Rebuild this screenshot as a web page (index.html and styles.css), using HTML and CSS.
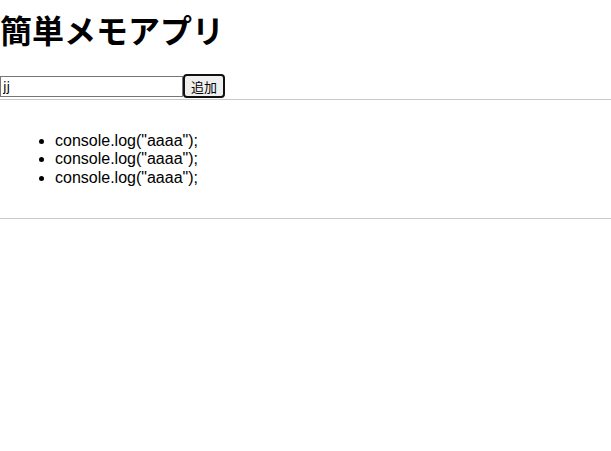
FILE: index.html
```html
<!DOCTYPE html>
<html lang="ja">
<head>
<meta charset="utf-8">
<title>簡単メモアプリ</title>
<link rel="stylesheet" href="styles.css">
</head>
<body>
<h1 class="title">簡単メモアプリ</h1>
<div class="form">
  <input class="memo-input" type="text" value="jj"><button class="add-btn">追加</button>
</div>
<hr class="rule">
<ul class="memo-list">
  <li>console.log("aaaa");</li>
  <li>console.log("aaaa");</li>
  <li>console.log("aaaa");</li>
</ul>
<hr class="rule">
</body>
</html>
```
FILE: styles.css
```css
body {
  margin: 0;
  font-family: "Liberation Sans", "Noto Sans CJK JP", sans-serif;
  color: #000;
  background: #fff;
}
.title {
  font-family: "Noto Sans CJK JP", sans-serif;
  font-size: 32px;
  font-weight: 700;
  line-height: 46px;
  margin: 6px 0 22px;
}
.form {
  display: flex;
  align-items: flex-end;
  height: 24px;
}
.memo-input {
  box-sizing: border-box;
  width: 183px;
  height: 21px;
  margin: 0 0 1px;
  padding: 1px 2px;
  border: 1px solid #767676;
  font-family: "DejaVu Sans", sans-serif;
  font-size: 13px;
}
.add-btn {
  box-sizing: border-box;
  height: 24px;
  margin: 0;
  padding: 0 6px;
  border: 2px solid #101010;
  border-radius: 4px;
  background: #efefef;
  font-family: "Noto Sans CJK JP", sans-serif;
  font-size: 13px;
  color: #000;
}
.rule {
  border: 0;
  border-top: 1px solid #c8c8c8;
  height: 0;
  margin: 1px 0 0;
}
.memo-list {
  margin: 32px 0 31px;
  padding-left: 55px;
  font-size: 16px;
  line-height: 18.4px;
}
```
